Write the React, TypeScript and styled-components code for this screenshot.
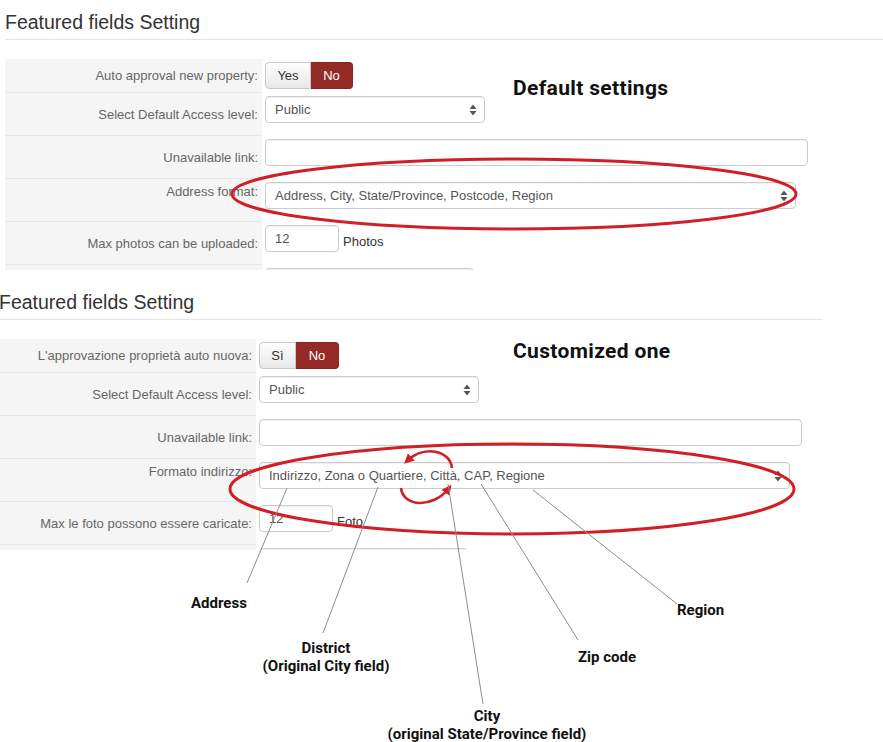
import React from "react";
import styled, { createGlobalStyle } from "styled-components";

const Global = createGlobalStyle`
  html, body { margin: 0; padding: 0; background: #fff; }
  #root { width: 883px; height: 742px; }
`;

const Page = styled.div`
  position: relative;
  width: 883px;
  height: 742px;
  overflow: hidden;
  background: #fff;
  display: flex;
  flex-direction: column;
  gap: 10px;
  font-family: "Liberation Sans", Arial, sans-serif;
`;

const Panel = styled.section<{ $shift: number; $width: number }>`
  flex: none;
  margin-left: ${(p) => p.$shift}px;
  width: ${(p) => p.$width}px;
  height: 270px;
  overflow: hidden;
`;

const Title = styled.h2`
  margin: 0;
  box-sizing: border-box;
  height: 40px;
  padding-top: 5px;
  border-bottom: 1px solid #e3e3e3;
  font: 400 19.5px/34px "Liberation Sans", Arial, sans-serif;
  color: #333;
`;

const Table = styled.div`
  display: grid;
  grid-template-columns: 257px 1fr;
  margin-top: 19px;
`;

const Label = styled.div<{ $top?: boolean }>`
  box-sizing: border-box;
  background: #f5f5f5;
  border-bottom: 1px solid #e7e7e7;
  display: flex;
  align-items: ${(p) => (p.$top ? "flex-start" : "center")};
  justify-content: flex-end;
  padding: ${(p) => (p.$top ? "5px 4px 0 0" : "0 4px 0 0")};
  font-size: 13px;
  line-height: 15px;
  color: #666;
  white-space: nowrap;
`;

const Field = styled.div`
  box-sizing: border-box;
  padding: 3px 0 3px 3px;
  display: flex;
  align-items: flex-start;
  gap: 4px;
`;

const Toggle = styled.div`
  display: flex;
  height: 27px;
  margin-bottom: 1px;
`;

const ToggleBtn = styled.div<{ $active?: boolean; $w: number }>`
  box-sizing: border-box;
  width: ${(p) => p.$w}px;
  height: 27px;
  display: flex;
  align-items: center;
  justify-content: center;
  font-size: 13px;
  border: 1px solid ${(p) => (p.$active ? "#8a2420" : "#c8c8c8")};
  color: ${(p) => (p.$active ? "#fff" : "#333")};
  background: ${(p) =>
    p.$active ? "#942a25" : "linear-gradient(#fdfdfd, #e8e8e8)"};
  &:first-child { border-radius: 4px 0 0 4px; }
  &:last-child { border-radius: 0 4px 4px 0; border-left: none; }
`;

const Box = styled.div<{ $w: number }>`
  box-sizing: border-box;
  width: ${(p) => p.$w}px;
  height: 27px;
  margin-bottom: 10px;
  border: 1px solid #ccc;
  border-radius: 4px;
  background: #fff;
  box-shadow: inset 0 1px 1px rgba(0, 0, 0, 0.06);
  padding: 0 9px;
  display: flex;
  align-items: center;
  justify-content: space-between;
  font-size: 13px;
  color: #555;
  white-space: nowrap;
  overflow: hidden;
`;

const Suffix = styled.span`
  font-size: 13px;
  color: #333;
  line-height: 27px;
  padding-top: 3px;
`;

const Carets = styled.svg`
  flex: none;
  margin-right: -2px;
`;

const Overlay = styled.svg`
  position: absolute;
  left: 0;
  top: 0;
  pointer-events: none;
`;

const Note = styled.div<{ $size?: number }>`
  position: absolute;
  font-family: Roboto, "Liberation Sans", sans-serif;
  font-weight: 700;
  font-size: ${(p) => p.$size ?? 15}px;
  letter-spacing: ${(p) => ((p.$size ?? 15) > 18 ? 0.35 : 0)}px;
  line-height: 1;
  color: #111;
  white-space: nowrap;
`;

const NoteBlock = styled.div`
  position: absolute;
  transform: translateX(-50%);
  font-family: Roboto, "Liberation Sans", sans-serif;
  font-weight: 700;
  font-size: 15px;
  line-height: 17.5px;
  color: #111;
  text-align: center;
  white-space: nowrap;
`;

const SelectCaret = () => (
  <Carets width="8" height="12" viewBox="0 0 8 12">
    <path d="M4 0.5 L7.5 5 L0.5 5 Z" fill="#555" />
    <path d="M0.5 7 L7.5 7 L4 11.5 Z" fill="#555" />
  </Carets>
);

type Copy = {
  approval: string;
  yes: string;
  yesW: number;
  noW: number;
  format: string;
  formatValue: string;
  photos: string;
  photosUnit: string;
  photosValue: string;
};

const Form: React.FC<{ c: Copy }> = ({ c }) => (
  <>
    <Title>Featured fields Setting</Title>
    <Table>
      <Label>{c.approval}</Label>
      <Field>
        <Toggle>
          <ToggleBtn $w={c.yesW}>{c.yes}</ToggleBtn>
          <ToggleBtn $w={c.noW} $active>
            No
          </ToggleBtn>
        </Toggle>
      </Field>

      <Label>Select Default Access level:</Label>
      <Field>
        <Box $w={220}>
          <span>Public</span>
          <SelectCaret />
        </Box>
      </Field>

      <Label>Unavailable link:</Label>
      <Field>
        <Box $w={543} />
      </Field>

      <Label $top>{c.format}</Label>
      <Field>
        <Box $w={531}>
          <span>{c.formatValue}</span>
          <SelectCaret />
        </Box>
      </Field>

      <Label>{c.photos}</Label>
      <Field>
        <Box $w={74}>
          <span>{c.photosValue}</span>
        </Box>
        <Suffix>{c.photosUnit}</Suffix>
      </Field>

      <Label />
      <Field>
        <Box $w={209} />
      </Field>
    </Table>
  </>
);

const english: Copy = {
  approval: "Auto approval new property:",
  yes: "Yes",
  yesW: 46,
  noW: 42,
  format: "Address format:",
  formatValue: "Address, City, State/Province, Postcode, Region",
  photos: "Max photos can be uploaded:",
  photosUnit: "Photos",
  photosValue: "12",
};

const italian: Copy = {
  approval: "L'approvazione proprietà auto nuova:",
  yes: "Sì",
  yesW: 37,
  noW: 43,
  format: "Formato indirizzo:",
  formatValue: "Indirizzo, Zona o Quartiere, Città, CAP, Regione",
  photos: "Max le foto possono essere caricate:",
  photosUnit: "Foto",
  photosValue: "12",
};

const RED = "#d11f26";
const LINE = "#8c8c8c";

export default function App() {
  return (
    <Page>
      <Global />
      <Panel $shift={5} $width={878}>
        <Form c={english} />
      </Panel>
      <Panel $shift={-1} $width={824}>
        <Form c={italian} />
      </Panel>

      <Overlay width="883" height="742" viewBox="0 0 883 742">
        <defs>
          <marker
            id="head"
            markerUnits="userSpaceOnUse"
            markerWidth="12"
            markerHeight="12"
            refX="6"
            refY="5"
            orient="auto"
          >
            <path d="M0 0 L10 5 L0 10 Z" fill={RED} />
          </marker>
        </defs>
        <ellipse cx="514" cy="194" rx="282" ry="35" fill="none" stroke={RED} strokeWidth="3" />
        <ellipse cx="512" cy="489" rx="282" ry="45" fill="none" stroke={RED} strokeWidth="3" />

        <path d="M452 468 C450 450 424 445 407 461" fill="none" stroke={RED} strokeWidth="2.6" markerEnd="url(#head)" />
        <path d="M401 488 C403 507 433 509 449 488" fill="none" stroke={RED} strokeWidth="2.6" markerEnd="url(#head)" />

        <g stroke={LINE} strokeWidth="1">
          <line x1="287" y1="488" x2="247" y2="583" />
          <line x1="378" y1="487" x2="323" y2="633" />
          <line x1="448" y1="484" x2="483" y2="704" />
          <line x1="481" y1="484" x2="578" y2="640" />
          <line x1="533" y1="490" x2="677" y2="604" />
        </g>
      </Overlay>

      <Note $size={21} style={{ left: 513, top: 78 }}>Default settings</Note>
      <Note $size={21} style={{ left: 513, top: 341 }}>Customized one</Note>
      <Note style={{ left: 191, top: 596 }}>Address</Note>
      <NoteBlock style={{ left: 326, top: 640 }}>
        District
        <br />
        (Original City field)
      </NoteBlock>
      <NoteBlock style={{ left: 487, top: 708 }}>
        City
        <br />
        (original State/Province field)
      </NoteBlock>
      <Note style={{ left: 578, top: 650 }}>Zip code</Note>
      <Note style={{ left: 677, top: 603 }}>Region</Note>
    </Page>
  );
}
